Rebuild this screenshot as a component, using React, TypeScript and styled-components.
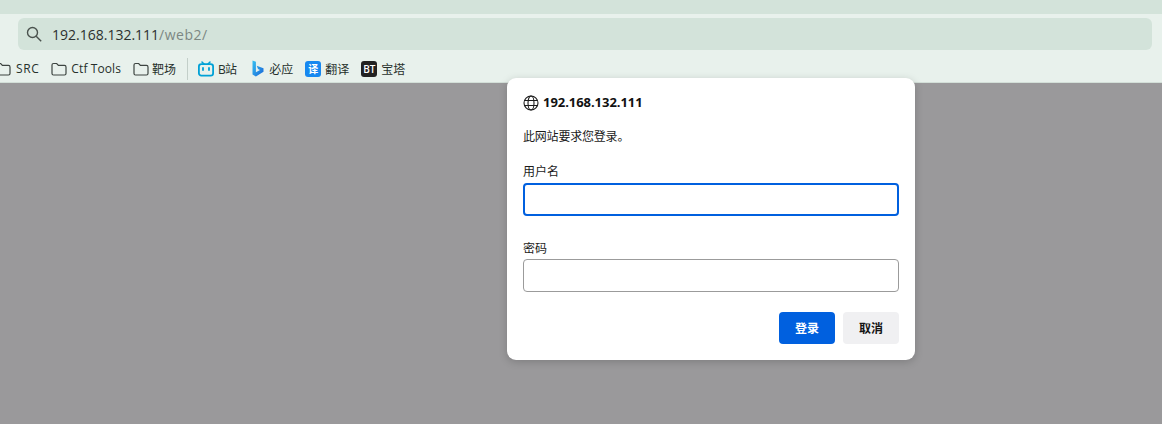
import React from "react";
import styled, { createGlobalStyle } from "styled-components";

const sans = `"Open Sans", "Noto Sans", "Noto Sans CJK SC", sans-serif`;

const Global = createGlobalStyle`
  html, body { margin: 0; padding: 0; background: #9a999b; }
  body { font-family: ${sans}; overflow: hidden; }
`;

const Page = styled.div`
  position: relative;
  width: 1162px;
  height: 424px;
  overflow: hidden;
  background: #9a999b;
`;
const TabStrip = styled.div`
  height: 14px;
  background: #d3e3da;
`;
const Toolbar = styled.div`
  background: #e8f1ec;
  border-bottom: 1px solid #d3dfd8;
  padding: 4px 10px 0 18px;
  box-sizing: content-box;
  height: 64px;
`;
const Omnibox = styled.div`
  height: 32px;
  display: flex;
  align-items: center;
  gap: 10px;
  padding-left: 8px;
  border-radius: 6px;
  background: #d3e3da;
  font-size: 14px;
  color: #2b302e;
`;
const UrlPath = styled.span`
  color: #7c8783;
  letter-spacing: 0.5px;
`;
const Bookmarks = styled.div`
  display: flex;
  align-items: center;
  height: 23px;
  margin: 7px 0 0 -23px;
  font-size: 12px;
  color: #26302b;
`;
const Bookmark = styled.div<{ $gap?: number; $after?: number; $spacing?: number }>`
  display: flex;
  align-items: center;
  gap: ${(p) => p.$gap ?? 4}px;
  margin-right: ${(p) => p.$after ?? 12}px;
  letter-spacing: ${(p) => p.$spacing ?? 0}px;
  white-space: nowrap;
`;
const Separator = styled.div`
  width: 1px;
  height: 22px;
  background: #c3cfc9;
  margin-right: 10px;
`;
const IconBadge = styled.span<{ $bg: string }>`
  width: 16px;
  height: 16px;
  border-radius: 3px;
  background: ${(p) => p.$bg};
  color: #fff;
  font-size: 10px;
  font-weight: 600;
  line-height: 16px;
  letter-spacing: 0;
  text-align: center;
  flex: none;
`;
const Dialog = styled.div`
  position: absolute;
  left: 507px;
  top: 78px;
  width: 408px;
  height: 282px;
  box-sizing: border-box;
  padding: 16px;
  background: #fff;
  border-radius: 9px;
  box-shadow: 0 2px 8px rgba(0, 0, 0, 0.18);
  color: #1b1b1b;
  font-size: 12px;
`;
const Origin = styled.div`
  display: flex;
  align-items: center;
  gap: 4px;
  height: 17px;
  font-weight: 700;
  font-size: 13px;
  color: #111;
`;
const OriginName = styled.span`
  margin-bottom: 2px;
  letter-spacing: -0.05px;
`;
const Message = styled.div`
  margin-top: 17px;
  height: 17px;
  line-height: 17px;
  letter-spacing: -0.2px;
`;
const FieldLabel = styled.label<{ $top: number; $line?: number }>`
  display: block;
  margin-top: ${(p) => p.$top}px;
  height: 17px;
  line-height: ${(p) => p.$line ?? 17}px;
`;
const Input = styled.div<{ $focused?: boolean }>`
  box-sizing: border-box;
  height: 33px;
  margin-top: 3px;
  border-radius: 4px;
  background: #fff;
  border: ${(p) => (p.$focused ? "2px solid #0060df" : "1px solid #9b9b9b")};
`;
const Actions = styled.div`
  display: flex;
  justify-content: flex-end;
  gap: 8px;
  margin-top: 20px;
`;
const Button = styled.button<{ $primary?: boolean }>`
  width: 56px;
  height: 32px;
  border: none;
  padding: 0;
  border-radius: 4px;
  font-family: ${sans};
  font-size: 12px;
  font-weight: 700;
  color: ${(p) => (p.$primary ? "#fff" : "#151515")};
  background: ${(p) => (p.$primary ? "#0060df" : "#f0f0f2")};
`;

const Folder = () => (
  <svg width="16" height="14" viewBox="0 0 16 14" fill="none" stroke="#3d4541" strokeWidth="1.2">
    <path d="M1 3a1.500 1.500 0 0 1 1.500-1.500h3.200L7.400 3.400h6.100A1.500 1.500 0 0 1 15 4.900v6.600a1.500 1.500 0 0 1-1.500 1.500h-11A1.500 1.500 0 0 1 1 11.500z" />
  </svg>
);
const Bili = () => (
  <svg width="16" height="16" viewBox="0 0 16 16" fill="none">
    <path d="M4 1l2 2M12 1l-2 2" stroke="#00a1d6" strokeWidth="1.5" strokeLinecap="round" />
    <rect x="0.900" y="3.200" width="14.200" height="11.400" rx="2.400" stroke="#00a1d6" strokeWidth="1.800" />
    <path d="M5 7v2M11 7v2" stroke="#00a1d6" strokeWidth="1.800" strokeLinecap="round" />
  </svg>
);
const Bing = () => (
  <svg width="12" height="17" viewBox="0 0 12 17">
    <defs>
      <linearGradient id="bingA" x1="0" y1="0" x2="1" y2="1">
        <stop offset="0" stopColor="#35c1f1" />
        <stop offset="1" stopColor="#1b66d8" />
      </linearGradient>
    </defs>
    <path d="M0.500 0.500l3.400 1.200v10.600l4.100-2.400-2-1L4.700 5.800l6.800 2.400v3.500L3.900 16.500 0.500 14.500z" fill="url(#bingA)" />
  </svg>
);
const Globe = () => (
  <svg width="16" height="16" viewBox="0 0 16 16" fill="none" stroke="#1c1c1c" strokeWidth="1.1">
    <circle cx="8" cy="8" r="7" />
    <ellipse cx="8" cy="8" rx="3" ry="7" />
    <path d="M1.500 5.500h13M1.500 10.500h13" />
  </svg>
);
const Search = () => (
  <svg width="16" height="16" viewBox="0 0 16 16" fill="none" stroke="#4a524e" strokeWidth="1.4">
    <circle cx="6.500" cy="6.500" r="5" />
    <path d="M10.200 10.200l5 5" />
  </svg>
);

export default function App() {
  return (
    <Page>
      <Global />
      <TabStrip />
      <Toolbar>
        <Omnibox>
          <Search />
          <span>
            192.168.132.111<UrlPath>/web2/</UrlPath>
          </span>
        </Omnibox>
        <Bookmarks>
          <Bookmark $gap={5} $after={12} $spacing={0.6}><Folder />SRC</Bookmark>
          <Bookmark $gap={4} $after={12} $spacing={0.1}><Folder />Ctf Tools</Bookmark>
          <Bookmark $gap={3} $after={11}><Folder />靶场</Bookmark>
          <Separator />
          <Bookmark $after={16} $spacing={-0.8}><Bili />B站</Bookmark>
          <Bookmark $gap={5}><Bing />必应</Bookmark>
          <Bookmark><IconBadge $bg="#1688f0">译</IconBadge>翻译</Bookmark>
          <Bookmark><IconBadge $bg="#222222">BT</IconBadge>宝塔</Bookmark>
        </Bookmarks>
      </Toolbar>
      <Dialog>
        <Origin><Globe /><OriginName>192.168.132.111</OriginName></Origin>
        <Message>此网站要求您登录。</Message>
        <FieldLabel $top={18}>用户名</FieldLabel>
        <Input $focused />
        <FieldLabel $top={23} $line={19}>密码</FieldLabel>
        <Input />
        <Actions>
          <Button $primary>登录</Button>
          <Button>取消</Button>
        </Actions>
      </Dialog>
    </Page>
  );
}
